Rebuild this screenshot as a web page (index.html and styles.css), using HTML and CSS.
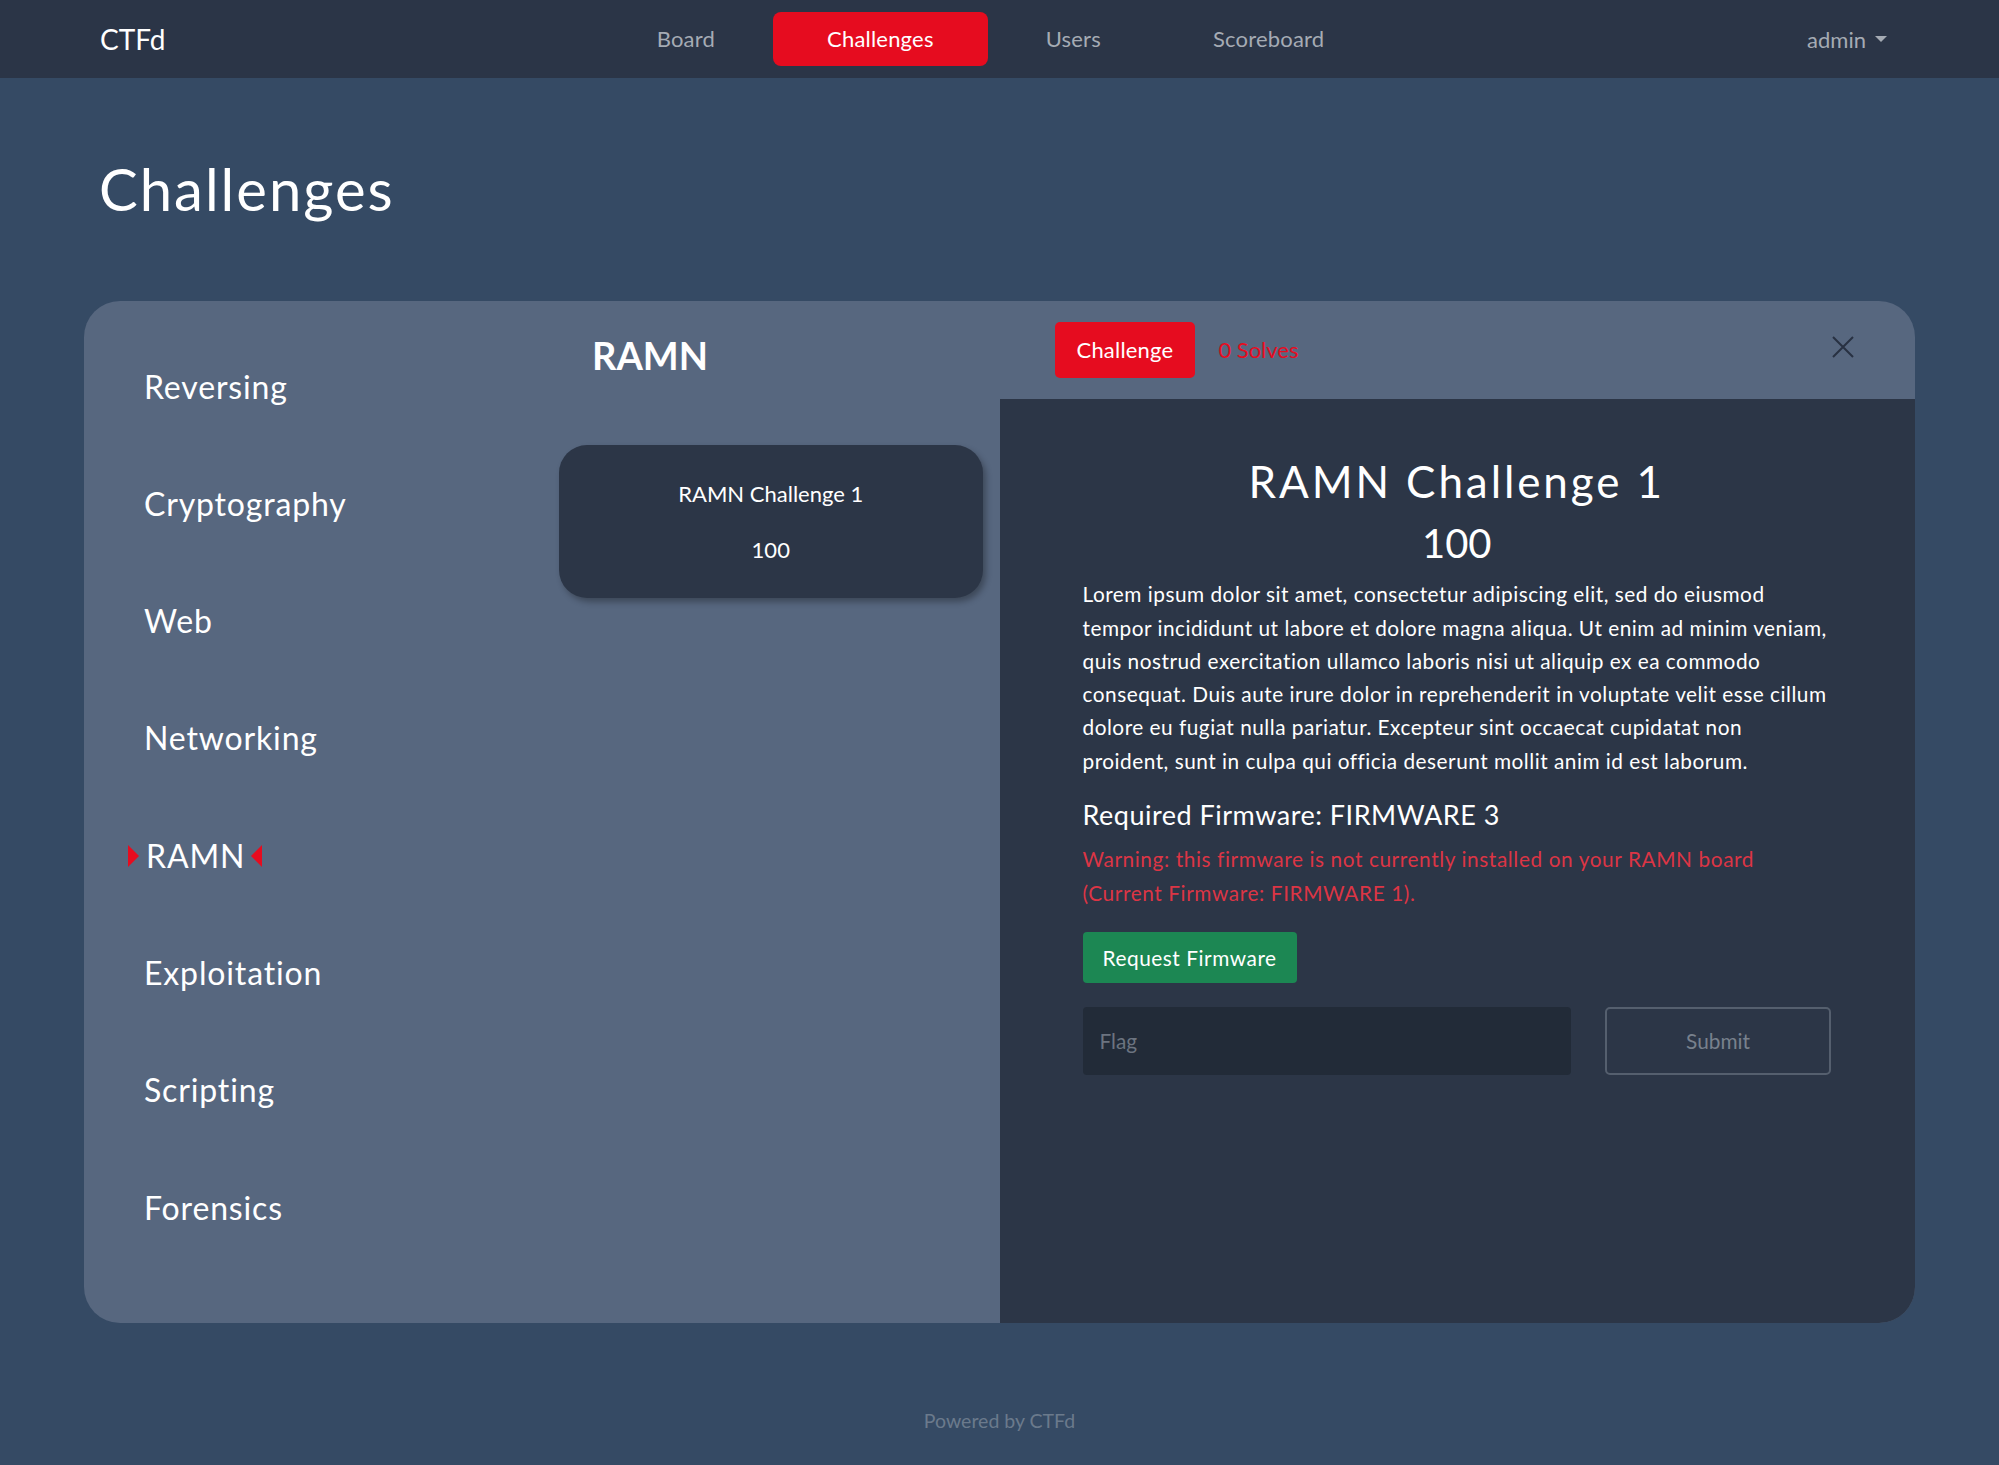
FILE: index.html
```html
<!DOCTYPE html>
<html>
<head>
    <title>Challenges - CTFd</title>
    <link rel="stylesheet" href="styles.css">
</head>
<body>
    <nav class="navbar">
        <a class="brand" href="#">CTFd</a>
        <ul class="nav-links">
            <li><a href="#">Board</a></li>
            <li><a href="#" class="active">Challenges</a></li>
            <li><a href="#">Users</a></li>
            <li><a href="#">Scoreboard</a></li>
        </ul>
        <div class="nav-user">admin <span class="caret"></span></div>
    </nav>

    <main class="page">
        <h1 class="page-title">Challenges</h1>

        <div class="board">
            <div class="board-left">
                <ul class="categories">
                    <li>Reversing</li>
                    <li>Cryptography</li>
                    <li>Web</li>
                    <li>Networking</li>
                    <li class="active">RAMN</li>
                    <li>Exploitation</li>
                    <li>Scripting</li>
                    <li>Forensics</li>
                </ul>

                <div class="category-challenges">
                    <h2>RAMN</h2>
                    <div class="challenge-card">
                        <span>RAMN Challenge 1</span>
                        <span>100</span>
                    </div>
                </div>
            </div>

            <div class="board-right">
                <div class="challenge-tabs">
                    <button class="tab-button">Challenge</button>
                    <span class="solves">0 Solves</span>
                    <button class="close-button" aria-label="Close">
                        <svg width="24" height="22" viewBox="0 0 24 22">
                            <path d="M2 1 L22 21 M22 1 L2 21" stroke="#283142" stroke-width="2" fill="none"/>
                        </svg>
                    </button>
                </div>

                <div class="challenge-body">
                    <h2 class="challenge-name">RAMN Challenge 1</h2>
                    <h3 class="challenge-value">100</h3>
                    <p class="challenge-desc">Lorem ipsum dolor sit amet, consectetur adipiscing elit, sed do eiusmod tempor incididunt ut labore et dolore magna aliqua. Ut enim ad minim veniam, quis nostrud exercitation ullamco laboris nisi ut aliquip ex ea commodo consequat. Duis aute irure dolor in reprehenderit in voluptate velit esse cillum dolore eu fugiat nulla pariatur. Excepteur sint occaecat cupidatat non proident, sunt in culpa qui officia deserunt mollit anim id est laborum.</p>

                    <h4 class="firmware">Required Firmware: FIRMWARE 3</h4>
                    <p class="warning">Warning: this firmware is not currently installed on your RAMN board (Current Firmware: FIRMWARE 1).</p>

                    <button class="request-button">Request Firmware</button>

                    <div class="flag-row">
                        <input type="text" class="flag-input" placeholder="Flag">
                        <button class="submit-button">Submit</button>
                    </div>
                </div>
            </div>
        </div>
    </main>

    <footer class="footer">Powered by CTFd</footer>
</body>
</html>
```

FILE: styles.css
```css
/* GENERAL */
body {
    margin: 0;
    padding: 0;
    background-color: #354a64;
    color: #fff;
    font-family: 'Lato', 'Open Sans', sans-serif;
}

a {
    text-decoration: none;
    color: inherit;
}

/* NAVBAR */
.navbar {
    height: 78px;
    box-sizing: border-box;
    padding: 0 112px 0 100px;
    background-color: #2b3547;
    display: grid;
    grid-template-columns: 1fr auto 1fr;
    align-items: center;
}

.brand {
    font-size: 28px;
    color: #fff;
}

.nav-links {
    list-style: none;
    margin: 0 6px 0 0;
    padding: 0;
    display: flex;
    gap: 4px;
}

.nav-links a {
    display: block;
    padding: 0 54px;
    line-height: 54px;
    font-size: 22px;
    letter-spacing: 0.2px;
    color: #a5abb4;
    border-radius: 8px;
}

.nav-links a.active {
    background-color: #e60c1f;
    color: #fff;
}

.nav-user {
    justify-self: end;
    font-size: 22px;
    color: #a5abb4;
    display: flex;
    align-items: center;
    gap: 9px;
}

.caret {
    width: 0;
    height: 0;
    border-top: 6px solid #a5abb4;
    border-left: 6px solid transparent;
    border-right: 6px solid transparent;
}

/* PAGE */
.page {
    padding: 0 84px;
}

.page-title {
    margin: 76px 0 77px;
    padding-left: 15px;
    font-size: 58px;
    font-weight: 400;
    line-height: 1.2;
    letter-spacing: 2px;
}

.board {
    display: grid;
    grid-template-columns: 1fr 1fr;
    height: 1022px;
    border-radius: 36px;
    overflow: hidden;
    background-color: #57677f;
}

/* CATEGORIES */
.board-left {
    display: flex;
}

.categories {
    list-style: none;
    margin: 0;
    width: 474px;
    box-sizing: border-box;
    padding: 66px 0 0 60px;
    display: flex;
    flex-direction: column;
    gap: 77.3px;
}

.categories li {
    font-size: 32px;
    line-height: 40px;
    letter-spacing: 0.85px;
    align-self: flex-start;
}

.categories li.active {
    position: relative;
    margin-left: 2px;
}

.categories li.active::before,
.categories li.active::after {
    content: '';
    position: absolute;
    top: 9px;
    border-top: 11px solid transparent;
    border-bottom: 11px solid transparent;
}

.categories li.active::before {
    left: -18px;
    border-left: 11px solid #e60c1f;
}

.categories li.active::after {
    right: -17px;
    border-right: 11px solid #e60c1f;
}

.category-challenges {
    flex: 1;
    padding: 32px 17px 0 1px;
}

.category-challenges h2 {
    margin: 0 0 67px 33px;
    font-size: 38px;
    font-weight: 700;
    line-height: 1.2;
}

.challenge-card {
    height: 153px;
    border-radius: 28px;
    background-color: #2c3647;
    box-shadow: 3px 4px 6px rgba(0, 0, 0, 0.3);
    display: flex;
    flex-direction: column;
    align-items: center;
    justify-content: center;
    gap: 28px;
    font-size: 22px;
    line-height: 28px;
}

/* CHALLENGE VIEW */
.board-right {
    display: flex;
    flex-direction: column;
}

.challenge-tabs {
    height: 98px;
    flex-shrink: 0;
    padding: 0 60px 0 55px;
    display: flex;
    align-items: center;
    gap: 23px;
}

.tab-button {
    border: none;
    border-radius: 5px;
    padding: 0 22px;
    line-height: 56px;
    background-color: #e60c1f;
    color: #fff;
    font-family: inherit;
    font-size: 22px;
    letter-spacing: 0.2px;
}

.solves {
    font-size: 22px;
    color: #e60c1f;
}

.close-button {
    margin-left: auto;
    margin-top: -6px;
    border: none;
    background: none;
    padding: 0;
    display: flex;
}

.challenge-body {
    flex: 1;
    background-color: #2c3647;
    padding: 56px 84px 0 83px;
}

.challenge-name {
    margin: 0;
    text-align: center;
    font-size: 44px;
    font-weight: 400;
    line-height: 1.2;
    letter-spacing: 2.9px;
}

.challenge-value {
    margin: 12px 0 0;
    text-align: center;
    font-size: 40px;
    font-weight: 400;
    line-height: 1.2;
}

.challenge-desc {
    margin: 10px 0 0;
    font-size: 20.8px;
    line-height: 1.6;
    letter-spacing: 0.5px;
}

.firmware {
    margin: 22px 0 0;
    font-size: 27px;
    font-weight: 400;
    line-height: 1.2;
    letter-spacing: 0.5px;
}

.warning {
    margin: 11px 0 0;
    font-size: 20.8px;
    line-height: 1.6;
    letter-spacing: 0.6px;
    color: #dc3545;
}

.request-button {
    margin-top: 23px;
    height: 51px;
    padding: 0 20px;
    border: none;
    border-radius: 4px;
    background-color: #1c8753;
    color: #fff;
    font-family: inherit;
    font-size: 20.8px;
    letter-spacing: 0.55px;
}

.flag-row {
    margin-top: 24px;
    display: flex;
    gap: 34px;
}

.flag-input {
    flex: 1;
    height: 68px;
    box-sizing: border-box;
    padding: 0 17px;
    border: none;
    border-radius: 4px;
    background-color: #222b38;
    color: #fff;
    font-family: inherit;
    font-size: 20.8px;
    outline: none;
}

.flag-input::placeholder {
    color: #6c7480;
}

.submit-button {
    width: 226px;
    height: 68px;
    border: 2px solid #555f6e;
    border-radius: 5px;
    background: transparent;
    color: #78818d;
    font-family: inherit;
    font-size: 20.8px;
}

/* FOOTER */
.footer {
    margin-top: 83px;
    text-align: center;
    font-size: 19.5px;
    line-height: 1.5;
    color: #6b7a8c;
}
```
